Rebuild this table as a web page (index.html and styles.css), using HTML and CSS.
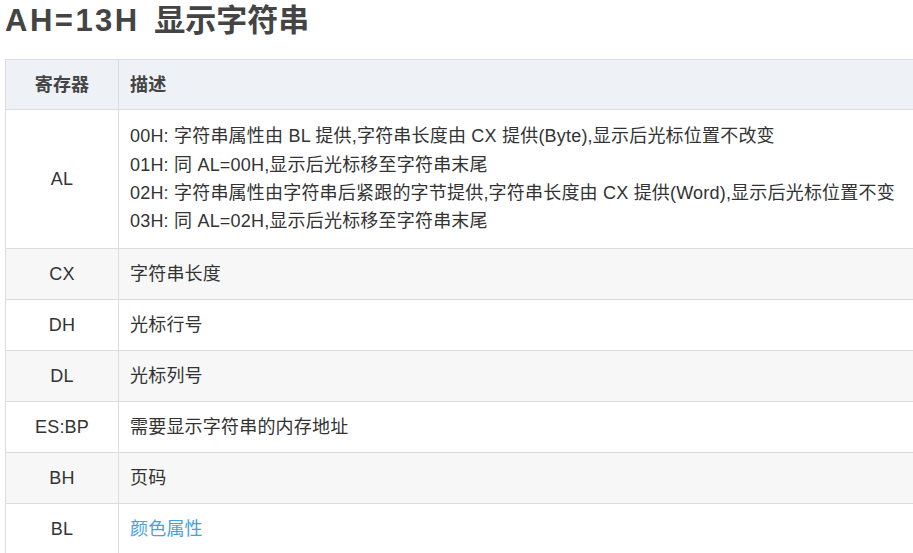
FILE: index.html
```html
<!DOCTYPE html>
<html lang="zh-CN">
<head>
<meta charset="utf-8">
<title>AH=13H 显示字符串</title>
<link rel="stylesheet" href="styles.css">
</head>
<body>
<h1 class="title"><span class="title-code">AH=13H</span> 显示字符串</h1>
<table class="reg-table">
  <thead>
    <tr><th class="col-reg">寄存器</th><th class="col-desc">描述</th></tr>
  </thead>
  <tbody>
    <tr>
      <td class="reg">AL</td>
      <td class="desc desc-multi">00H: 字符串属性由 BL 提供,字符串长度由 CX 提供(Byte),显示后光标位置不改变<br>01H: 同 AL=00H,显示后光标移至字符串末尾<br>02H: 字符串属性由字符串后紧跟的字节提供,字符串长度由 CX 提供(Word),显示后光标位置不变<br>03H: 同 AL=02H,显示后光标移至字符串末尾</td>
    </tr>
    <tr><td class="reg">CX</td><td class="desc">字符串长度</td></tr>
    <tr><td class="reg">DH</td><td class="desc">光标行号</td></tr>
    <tr><td class="reg">DL</td><td class="desc">光标列号</td></tr>
    <tr><td class="reg">ES:BP</td><td class="desc">需要显示字符串的内存地址</td></tr>
    <tr><td class="reg">BH</td><td class="desc">页码</td></tr>
    <tr><td class="reg">BL</td><td class="desc"><a class="link" href="#">颜色属性</a></td></tr>
  </tbody>
</table>
</body>
</html>
```
FILE: styles.css
```css
html, body {
  margin: 0;
  padding: 0;
  overflow: hidden;
  background: #fff;
}
body {
  padding: 0 5px;
  font-family: "Liberation Sans", Arial, "Noto Sans CJK SC", sans-serif;
  color: #333;
}
.title {
  margin: 0;
  font-size: 31px;
  line-height: 42px;
  font-weight: bold;
  color: #444;
  white-space: nowrap;
}
.title-code {
  letter-spacing: 2.5px;
  margin-right: 6px;
}
.reg-table {
  margin-top: 17px;
  border-collapse: collapse;
  width: 940px;
  font-size: 18px;
  line-height: 28.3px;
  letter-spacing: 0.2px;
}
.reg-table th,
.reg-table td {
  border: 1px solid #dcdcdc;
  padding: 11px 11px 10.7px;
  text-align: left;
  vertical-align: middle;
  white-space: nowrap;
}
.reg-table thead th {
  padding-top: 10.5px;
  padding-bottom: 10.2px;
  background: #eef1f5;
  font-weight: bold;
  color: #444;
}
.reg-table .col-reg,
.reg-table .reg {
  width: 90px;
  text-align: center;
}
.reg-table .desc-multi {
  padding-top: 12.5px;
  padding-bottom: 12.5px;
}
.reg-table tbody tr:nth-child(even) td {
  background: #f7f7f7;
}
.link {
  color: #45a2e0;
  text-decoration: none;
}
```
